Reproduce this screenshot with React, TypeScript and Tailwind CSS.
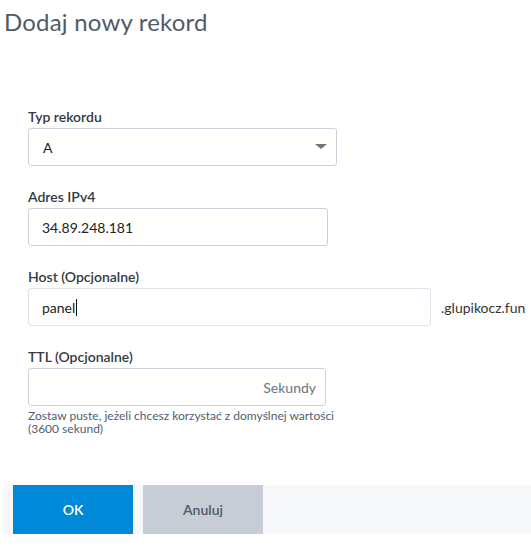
import { useState } from 'react'

// Modal body: "add new DNS record" form
function Field({ label, children }: { label: string; children: React.ReactNode }) {
  return (
    <div className="flex flex-col">
      <label className="text-[14px] font-semibold text-[#333a42] leading-4 mb-[3px]">{label}</label>
      {children}
    </div>
  )
}

export default function App() {
  const [host, setHost] = useState('panel')
  const [ip, setIp] = useState('34.89.248.181')

  return (
    <div className="w-[531px] h-[548px] bg-white font-['Lato',sans-serif] relative">
      <h1 className="pl-[4px] pt-[6px] text-[24px] leading-8 text-[#505b66] tracking-[0.2px]">
        Dodaj nowy rekord
      </h1>

      <div className="pl-[28px] pt-[71px] flex flex-col gap-[23px]">
        <Field label="Typ rekordu">
          <div className="w-[309px] h-[38px] border border-[#c9d3dd] rounded-[3px] flex items-center justify-between pl-[14px] pr-[9px]">
            <span className="text-[14px] text-[#222]">A</span>
            <svg width="12" height="6" viewBox="0 0 12 6">
              <path d="M0 0h12L6 5z" fill="#6b7680" />
            </svg>
          </div>
        </Field>

        <Field label="Adres IPv4">
          <input
            value={ip}
            onChange={(e) => setIp(e.target.value)}
            className="w-[300px] h-[38px] border border-[#c9d3dd] rounded-[3px] px-[13px] text-[14px] text-[#222] outline-none"
          />
        </Field>

        <Field label="Host (Opcjonalne)">
          <div className="flex items-center">
            <div className="w-[403px] h-[38px] border border-[#dce3ea] rounded-[3px] flex items-center pl-[13px]">
              <span className="text-[14px] text-[#222]">{host}</span>
              <span className="w-px h-[17px] bg-[#111] ml-[1px]" />
            </div>
            <span className="ml-[10px] text-[14px] text-[#333]">.glupikocz.fun</span>
          </div>
        </Field>

        <Field label="TTL (Opcjonalne)">
          <div className="w-[298px] h-[38px] border border-[#c9d3dd] rounded-[3px] flex items-center justify-end pr-[9px]">
            <span className="text-[14px] text-[#6b7580]">Sekundy</span>
          </div>
          <p className="mt-[3px] text-[12px] leading-[13px] text-[#4e6070] w-[310px]">
            Zostaw puste, jeżeli chcesz korzystać z domyślnej wartości (3600 sekund)
          </p>
        </Field>
      </div>

      <div className="absolute left-[3px] right-0 top-[485px] h-[49px] bg-[#f7f8fa] flex pl-[10px] gap-[10px]">
        <button
          onClick={() => setHost(host)}
          className="w-[120px] h-full bg-[#0088d9] text-white text-[14px] font-semibold"
        >
          OK
        </button>
        <button className="w-[120px] h-full bg-[#c6cdd4] text-[#4f5b66] text-[14px] font-semibold">
          Anuluj
        </button>
      </div>
    </div>
  )
}
